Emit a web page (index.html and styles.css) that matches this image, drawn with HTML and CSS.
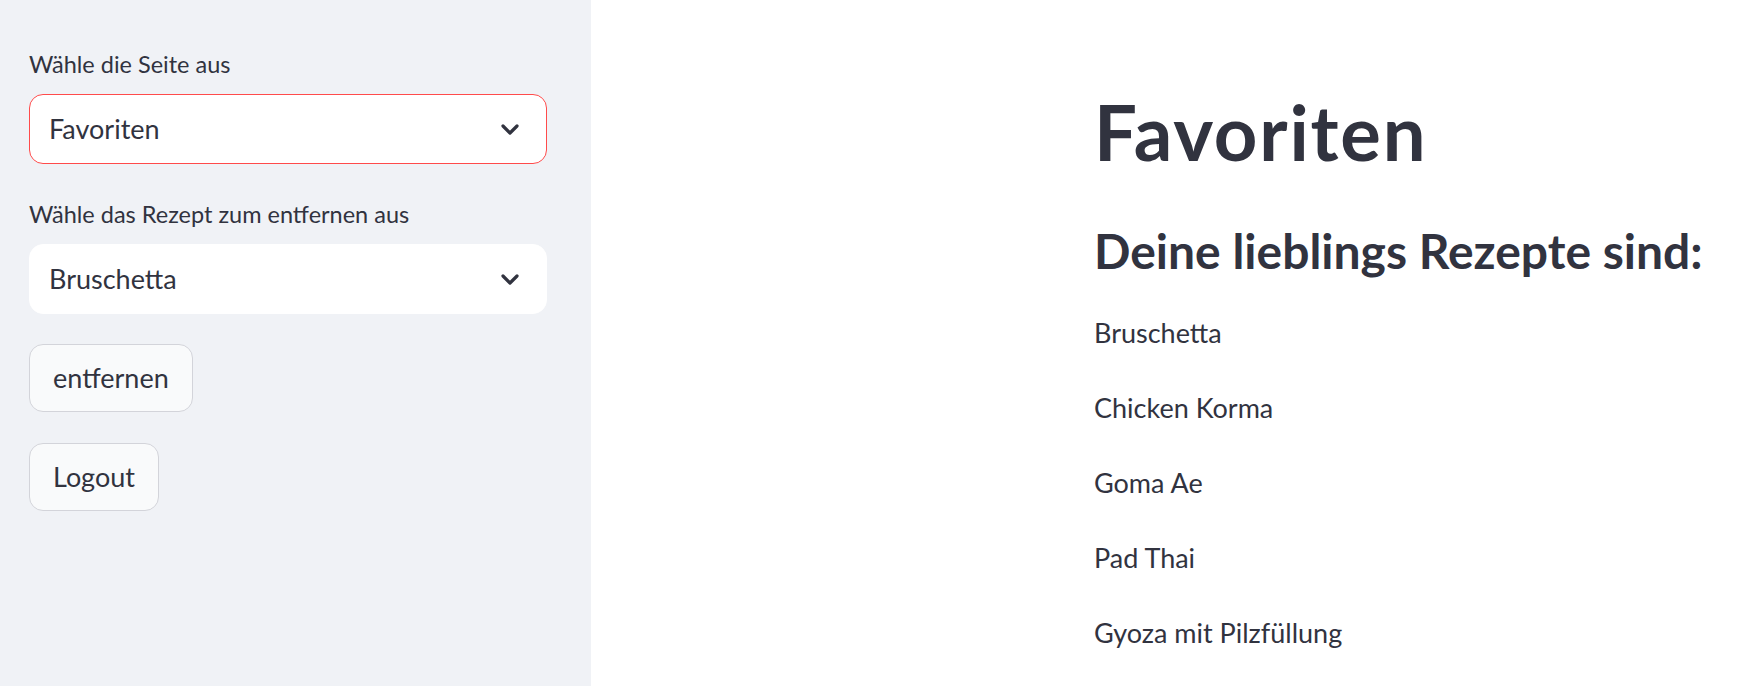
FILE: index.html
```html
<!DOCTYPE html>
<html lang="de">
<head>
<meta charset="utf-8">
<title>Favoriten</title>
<link rel="stylesheet" href="styles.css">
</head>
<body>
<div class="app">
  <aside class="sidebar">
    <div class="field">
      <label class="label">Wähle die Seite aus</label>
      <div class="select select-focus">
        <span class="select-value">Favoriten</span>
        <svg class="chevron" width="18" height="11" viewBox="0 0 18 11"><polyline points="2,2 9,9 16,2" fill="none" stroke="#31333f" stroke-width="3.2" stroke-linecap="round" stroke-linejoin="round"/></svg>
      </div>
    </div>
    <div class="field field-second">
      <label class="label">Wähle das Rezept zum entfernen aus</label>
      <div class="select">
        <span class="select-value">Bruschetta</span>
        <svg class="chevron" width="18" height="11" viewBox="0 0 18 11"><polyline points="2,2 9,9 16,2" fill="none" stroke="#31333f" stroke-width="3.2" stroke-linecap="round" stroke-linejoin="round"/></svg>
      </div>
    </div>
    <button class="btn btn-first">entfernen</button>
    <button class="btn btn-second">Logout</button>
  </aside>
  <main class="main">
    <h1 class="title">Favoriten</h1>
    <h2 class="subtitle">Deine lieblings Rezepte sind:</h2>
    <div class="list">
      <p class="item">Bruschetta</p>
      <p class="item">Chicken Korma</p>
      <p class="item">Goma Ae</p>
      <p class="item">Pad Thai</p>
      <p class="item">Gyoza mit Pilzfüllung</p>
    </div>
  </main>
</div>
</body>
</html>
```
FILE: styles.css
```css
html, body {
  margin: 0;
  padding: 0;
  height: 100%;
  background: #ffffff;
}
body {
  font-family: "Lato", "Noto Sans", sans-serif;
  color: #31333f;
  overflow: hidden;
}
.app {
  display: flex;
  height: 686px;
}
.sidebar {
  width: 591px;
  flex: 0 0 591px;
  background: #f0f2f6;
  box-sizing: border-box;
  padding: 47px 44px 0 29px;
  display: flex;
  flex-direction: column;
  align-items: flex-start;
}
.field {
  width: 518px;
  display: flex;
  flex-direction: column;
}
.field-second {
  margin-top: 33px;
}
.label {
  font-size: 23.5px;
  line-height: 34px;
  height: 34px;
  margin-bottom: 13px;
}
.select {
  box-sizing: border-box;
  height: 70px;
  width: 518px;
  background: #ffffff;
  border: 1px solid #ffffff;
  border-radius: 14px;
  display: flex;
  align-items: center;
  justify-content: space-between;
  padding: 0 27px 0 19px;
}
.select-focus {
  border-color: #ff4b4b;
}
.select-value {
  font-size: 27px;
  line-height: 1.2;
}
.chevron {
  display: block;
}
.btn {
  box-sizing: border-box;
  height: 68px;
  padding: 0 23px;
  font-family: "Lato", "Noto Sans", sans-serif;
  font-size: 27px;
  line-height: 1.2;
  color: #31333f;
  background: #f9fafb;
  border: 1px solid #d3d4da;
  border-radius: 14px;
  display: flex;
  align-items: center;
}
.btn-first {
  margin-top: 30px;
}
.btn-second {
  margin-top: 31px;
}
.main {
  flex: 1;
  padding: 86px 0 0 503px;
  min-width: 0;
}
.title {
  margin: 0;
  font-size: 76px;
  font-weight: 700;
  letter-spacing: 1.8px;
  line-height: 1.2;
  white-space: nowrap;
}
.subtitle {
  margin: 45px 0 0 0;
  font-size: 48px;
  font-weight: 700;
  line-height: 1.2;
  white-space: nowrap;
}
.list {
  margin-top: 15px;
}
.item {
  margin: 0;
  font-size: 27px;
  line-height: 75px;
  white-space: nowrap;
}
```
